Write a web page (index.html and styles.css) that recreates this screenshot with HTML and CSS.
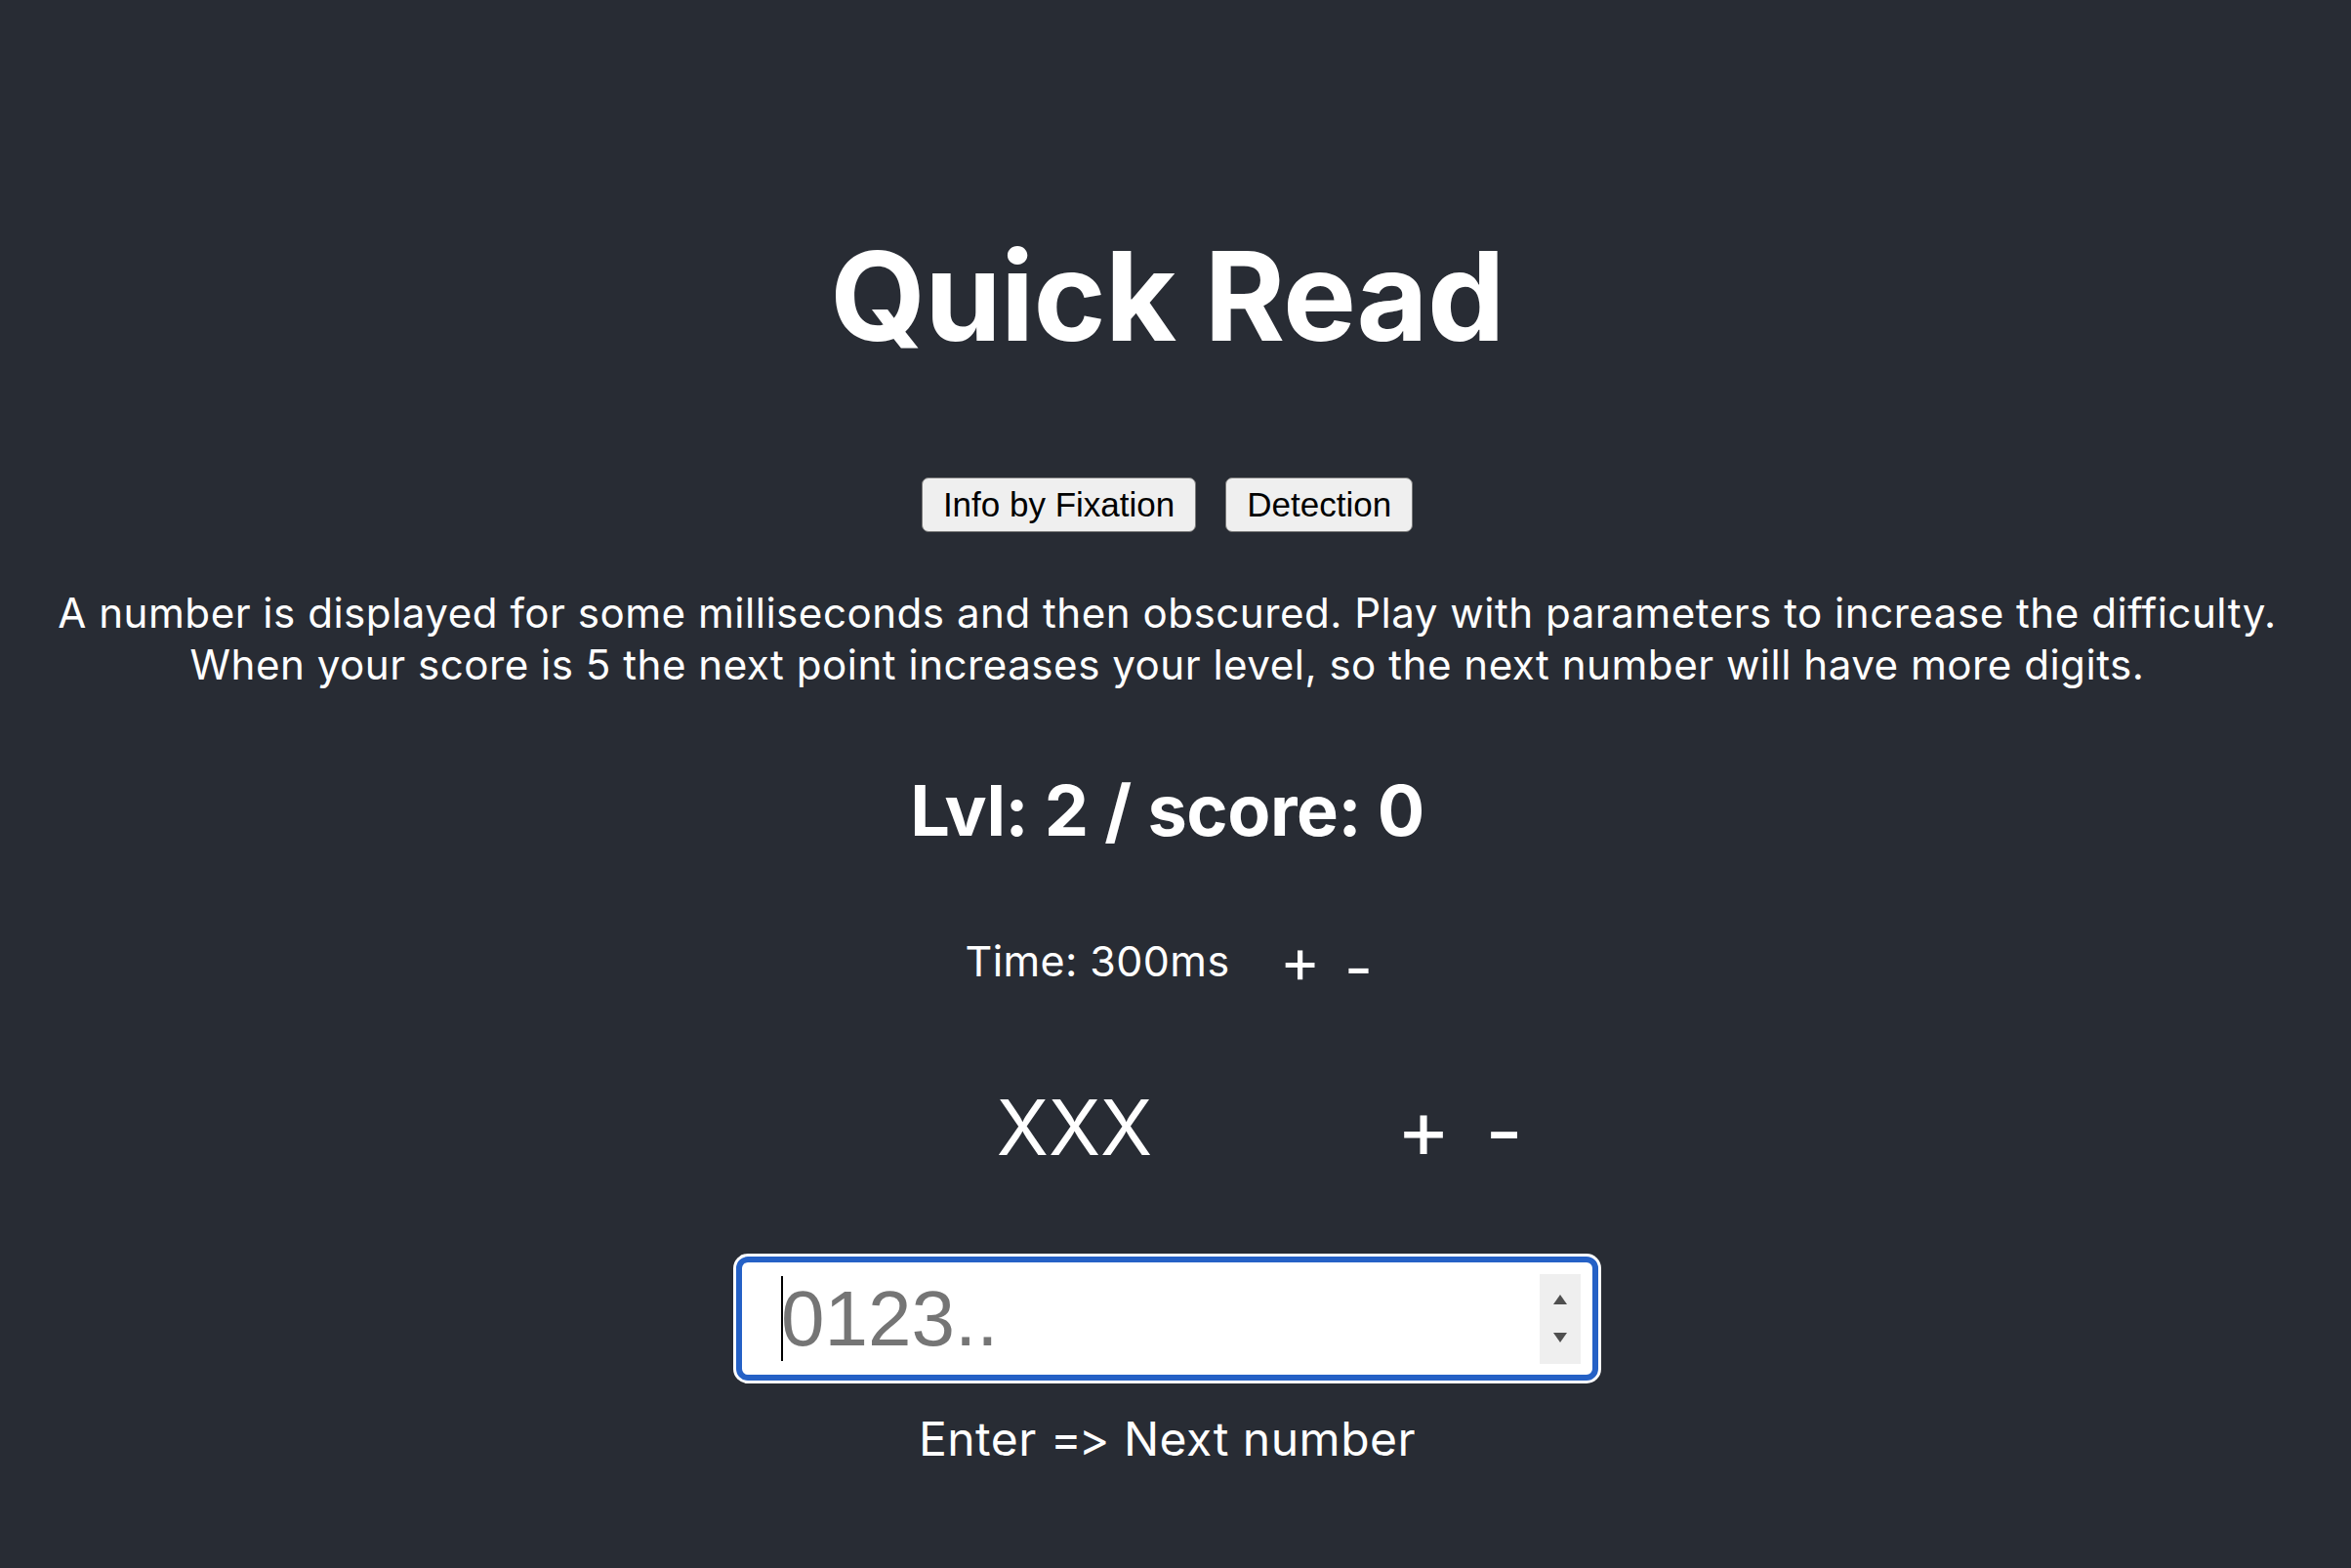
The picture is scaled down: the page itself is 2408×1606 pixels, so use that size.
FILE: index.html
```html
<!DOCTYPE html>
<html lang="en">
<head>
<meta charset="utf-8">
<title>Quick Read</title>
<link rel="stylesheet" href="styles.css">
</head>
<body>
<main class="app">
  <h1 class="title">Quick Read</h1>
  <nav class="modes">
    <button class="mode-btn">Info by Fixation</button>
    <button class="mode-btn">Detection</button>
  </nav>
  <p class="intro">A number is displayed for some milliseconds and then obscured. Play with parameters to increase the difficulty.<br>When your score is 5 the next point increases your level, so the next number will have more digits.</p>
  <div class="score">Lvl: 2 / score: 0</div>
  <div class="time-row">
    <span class="time-label">Time: 300ms</span>
    <button class="step step-time step-plus">+</button>
    <button class="step step-time step-minus">-</button>
  </div>
  <div class="num-row">
    <span class="number">XXX</span>
    <button class="step step-num step-plus">+</button>
    <button class="step step-num step-minus">-</button>
  </div>
  <div class="num-field">
    <span class="caret"></span>
    <input class="num-input" type="text" placeholder="0123..">
    <span class="spinner">
      <svg width="16" height="12" viewBox="0 0 16 12"><path d="M8 1 L15 11 L1 11 Z" fill="#4f4f4f"/></svg>
      <svg width="16" height="12" viewBox="0 0 16 12"><path d="M1 1 L15 1 L8 11 Z" fill="#4f4f4f"/></svg>
    </span>
  </div>
  <div class="hint">Enter <span class="arrow-eq">=</span>&gt; Next number</div>
</main>
</body>
</html>
```
FILE: styles.css
```css
html, body {
  margin: 0;
  padding: 0;
}
body {
  background: #282c34;
  color: #ffffff;
  font-family: Inter, "Noto Sans", sans-serif;
  font-feature-settings: "calt" 0, "liga" 0;
  font-variant-ligatures: none;
  min-height: 1606px;
}
.app {
  display: flex;
  flex-direction: column;
  align-items: center;
  text-align: center;
  padding: 227px 17px 0 0;
}
.title {
  margin: 0 0 110px;
  font-size: 126px;
  font-weight: 700;
  line-height: normal;
  letter-spacing: -0.7px;
}
.modes {
  display: flex;
  gap: 30px;
  margin-bottom: 56px;
}
.mode-btn {
  font-family: "Liberation Sans", Arial, sans-serif;
  font-size: 35px;
  line-height: 40px;
  color: #000;
  background: #efefef;
  border: 1px solid #7a7a7a;
  border-radius: 7px;
  padding: 7px 21px;
  margin: 0;
}
.intro {
  margin: 0 0 79px;
  font-size: 42.12px;
  line-height: 53px;
  letter-spacing: 0.5px;
  white-space: nowrap;
}
.score {
  font-size: 72px;
  font-weight: 700;
  line-height: normal;
  letter-spacing: -0.45px;
  margin-bottom: 73px;
}
.time-row {
  display: flex;
  justify-content: center;
  align-items: baseline;
  padding-left: 12px;
  margin-bottom: 97px;
}
.time-label {
  font-size: 43px;
  line-height: normal;
  letter-spacing: 0.4px;
}
.step {
  background: none;
  border: 0;
  padding: 0;
  margin: 0;
  color: #fff;
  font-family: Inter, "Noto Sans", sans-serif;
  line-height: 1;
  text-align: center;
}
.step-time {
  font-size: 63px;
  width: 46px;
}
.step-time.step-plus {
  margin-left: 49px;
  transform: translateY(6px);
}
.step-time.step-minus {
  margin-left: 14px;
  transform: translateY(14px);
}
.num-row {
  display: flex;
  justify-content: center;
  align-items: baseline;
  margin-bottom: 85px;
}
.number {
  width: 560px;
  font-size: 78px;
  line-height: normal;
}
.step-num {
  font-size: 84px;
  width: 60px;
}
.step-num.step-plus {
  margin-left: 47.5px;
  transform: translateY(3px);
}
.step-num.step-minus {
  margin-left: 22.5px;
  transform: translateY(6px);
}
.num-field {
  box-sizing: border-box;
  width: 883px;
  height: 127px;
  display: flex;
  align-items: center;
  background: #fff;
  border: 6px solid #2561c6;
  border-radius: 12px;
  box-shadow: 0 0 0 3px #fff;
  padding: 0 12px 0 40px;
}
.caret {
  width: 2px;
  height: 87px;
  background: #000;
  flex: none;
}
.num-input {
  flex: 1;
  min-width: 0;
  border: 0;
  outline: none;
  background: transparent;
  padding: 0;
  margin: 0 0 0 -2px;
  font-family: "Liberation Sans", Arial, sans-serif;
  font-size: 80px;
  line-height: normal;
  color: #000;
}
.num-input::placeholder {
  color: #757575;
}
.spinner {
  flex: none;
  width: 42px;
  height: 92px;
  background: #efefef;
  display: flex;
  flex-direction: column;
  justify-content: center;
  align-items: center;
  gap: 27px;
}
.spinner svg {
  display: block;
}
.hint {
  margin-top: 30px;
  font-size: 48px;
  line-height: normal;
  letter-spacing: 0.5px;
}
.arrow-eq {
  letter-spacing: -3px;
}
```
